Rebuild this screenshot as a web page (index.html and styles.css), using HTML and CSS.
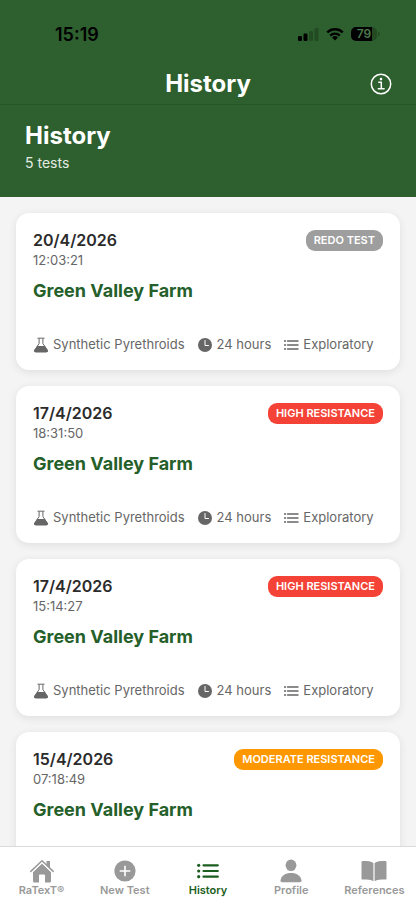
FILE: index.html
```html
<!DOCTYPE html>
<html lang="en">
<head>
<meta charset="utf-8">
<meta name="viewport" content="width=device-width, initial-scale=1">
<title>History</title>
<link rel="stylesheet" href="styles.css">
</head>
<body>
<svg class="sprite" aria-hidden="true">
  <symbol id="flask" viewBox="0 0 16 16">
    <path d="M4.500 1.200h7M6.100 1.500v5L1.800 13q-1.100 2 1 2h10.400q2.100 0 1-2L9.900 6.500v-5" fill="none" stroke="currentColor" stroke-width="1"/>
    <path d="M4.200 8.900h7.600l2.800 4.100q.8 2-1.200 2H2.600q-2 0-1.200-2z" fill="currentColor"/>
  </symbol>
  <symbol id="clock" viewBox="0 0 16 16">
    <circle cx="8" cy="8" r="7" fill="currentColor"/>
    <path d="M8 3.500V8.500h3.500" fill="none" stroke="#fff" stroke-width="1" stroke-linecap="round"/>
  </symbol>
  <symbol id="list" viewBox="0 0 16 16">
    <path d="M4.500 4H15M4.500 8H15M4.500 12H15" fill="none" stroke="currentColor" stroke-width="1.500" stroke-linecap="round"/>
    <g fill="currentColor"><circle cx="2" cy="4" r="1"/><circle cx="2" cy="8" r="1"/><circle cx="2" cy="12" r="1"/></g>
  </symbol>
</svg>

<header class="top">
  <div class="status">
    <span class="clock">15:19</span>
    <div class="indicators">
      <svg width="22" height="14" viewBox="0 0 22 14" aria-hidden="true">
        <rect x="1" y="9" width="4" height="5" rx="1.200"/>
        <rect x="6.500" y="6.500" width="4" height="7.500" rx="1.200"/>
        <rect x="12" y="4" width="4" height="10" rx="1.200" opacity=".22"/>
        <rect x="17.500" y="1" width="4" height="13" rx="1.200" opacity=".22"/>
      </svg>
      <svg width="18" height="14" viewBox="0 0 18 14" aria-hidden="true">
        <g fill="none" stroke="#000" stroke-width="2.300"><path d="M1.200 5.400a11.200 11.200 0 0 1 15.600 0"/><path d="M4.200 8.600a7 7 0 0 1 9.600 0"/></g>
        <path d="M9 13.400 6.100 10.500a4.200 4.200 0 0 1 5.800 0z"/>
      </svg>
      <div class="battery"><span>79</span></div>
    </div>
  </div>
  <div class="nav">
    <h1 class="nav-title">History</h1>
    <button class="info" type="button" aria-label="Information">
      <svg width="22" height="22" viewBox="0 0 22 22" fill="none" stroke="#fff" aria-hidden="true">
        <circle cx="11" cy="11" r="9.700" stroke-width="1.500"/>
        <path d="M8.800 9.300h2.500v6M8.300 15.700h5.800" stroke-width="1.500" stroke-linecap="round" stroke-linejoin="round"/>
        <circle cx="11" cy="6.100" r="1.300" fill="#fff" stroke="none"/>
      </svg>
    </button>
  </div>
</header>

<section class="summary">
  <h2>History</h2>
  <p>5 tests</p>
</section>

<main class="tests">
  <article class="card">
    <div class="card-head"><div><h3>20/4/2026</h3><time>12:03:21</time></div><span class="badge redo">REDO TEST</span></div>
    <p class="farm">Green Valley Farm</p>
    <ul class="meta">
      <li><svg><use href="#flask"/></svg>Synthetic Pyrethroids</li>
      <li><svg><use href="#clock"/></svg>24 hours</li>
      <li><svg><use href="#list"/></svg>Exploratory</li>
    </ul>
  </article>
  <article class="card">
    <div class="card-head"><div><h3>17/4/2026</h3><time>18:31:50</time></div><span class="badge high">HIGH RESISTANCE</span></div>
    <p class="farm">Green Valley Farm</p>
    <ul class="meta">
      <li><svg><use href="#flask"/></svg>Synthetic Pyrethroids</li>
      <li><svg><use href="#clock"/></svg>24 hours</li>
      <li><svg><use href="#list"/></svg>Exploratory</li>
    </ul>
  </article>
  <article class="card">
    <div class="card-head"><div><h3>17/4/2026</h3><time>15:14:27</time></div><span class="badge high">HIGH RESISTANCE</span></div>
    <p class="farm">Green Valley Farm</p>
    <ul class="meta">
      <li><svg><use href="#flask"/></svg>Synthetic Pyrethroids</li>
      <li><svg><use href="#clock"/></svg>24 hours</li>
      <li><svg><use href="#list"/></svg>Exploratory</li>
    </ul>
  </article>
  <article class="card">
    <div class="card-head"><div><h3>15/4/2026</h3><time>07:18:49</time></div><span class="badge moderate">MODERATE RESISTANCE</span></div>
    <p class="farm">Green Valley Farm</p>
    <ul class="meta"></ul>
  </article>
</main>

<nav class="tabs">
  <a href="#home">
    <svg viewBox="0 0 26 26" fill="currentColor" aria-hidden="true">
      <path d="M13 5.500 22 13.800V23q0 1.500-1.500 1.500H16v-7q0-1-1-1h-4q-1 0-1 1v7H5.500Q4 24.500 4 23v-9.200z"/>
      <path d="M13 5.200 3 14.600M13 5.200l10 9.400" fill="none" stroke="#fff" stroke-width="1"/>
      <path d="M1.800 13.400 13 2.800l11.200 10.600" fill="none" stroke="currentColor" stroke-width="1.500" stroke-linecap="round" stroke-linejoin="round"/>
      <path d="M17.500 3H21v7.200l-3.500-3.300z"/>
    </svg>RaTexT®</a>
  <a href="#new">
    <svg viewBox="0 0 26 26" aria-hidden="true"><circle cx="13" cy="13" r="10.600" fill="currentColor"/><path d="M13 8.300v9.400M8.300 13h9.400" stroke="#fff" stroke-width="1.600" stroke-linecap="round"/></svg>New Test</a>
  <a href="#history" class="active" aria-current="page">
    <svg viewBox="0 0 26 26" aria-hidden="true"><path d="M8.500 7.300h14.300M8.500 13h14.300M8.500 18.700h14.300" stroke="currentColor" stroke-width="2.200" stroke-linecap="round"/><g fill="currentColor"><circle cx="3.700" cy="7.300" r="1.600"/><circle cx="3.700" cy="13" r="1.600"/><circle cx="3.700" cy="18.700" r="1.600"/></g></svg>History</a>
  <a href="#profile">
    <svg viewBox="0 0 26 26" fill="currentColor" aria-hidden="true"><ellipse cx="13" cy="7.300" rx="5.400" ry="5.800"/><path d="M4.200 24.300q-1.900 0-1.700-1.800C3.200 17.600 7.500 15 13 15s9.800 2.600 10.500 7.500q.2 1.800-1.700 1.800z"/></svg>Profile</a>
  <a href="#references">
    <svg viewBox="0 0 26 26" fill="currentColor" aria-hidden="true"><path d="M12.400 4.900v18.300C10 21.800 6.500 21.600 1.700 21.600q-1.200 0-1.200-1.200V4.300q0-1.200 1.200-1.200c5 0 8.600.3 10.700 1.800zM13.600 4.900v18.300c2.400-1.400 5.900-1.600 10.700-1.600q1.200 0 1.200-1.200V4.300q0-1.200-1.200-1.200c-5 0-8.600.3-10.700 1.800z"/></svg>References</a>
</nav>
</body>
</html>
```
FILE: styles.css
```css
* { box-sizing: border-box; }

body {
  margin: 0;
  height: 100vh;
  display: flex;
  flex-direction: column;
  overflow: hidden;
  background: #f4f4f4;
  color: #2b2b2b;
  font-family: Inter, "Liberation Sans", sans-serif;
}

h1, h2, h3, p, ul { margin: 0; padding: 0; }

.sprite { display: none; }

.top {
  flex: none;
  background: #2d602e;
  border-bottom: 1px solid #285528;
}

.status {
  display: flex;
  justify-content: space-between;
  align-items: center;
  height: 64px;
  padding: 4px 36px 0 55px;
}

.clock {
  color: #000;
  font-size: 18px;
  font-weight: 600;
}

.indicators {
  display: flex;
  align-items: center;
  gap: 7px;
}

.indicators > svg { display: block; }

.battery {
  position: relative;
  width: 26px;
  height: 14px;
  margin-right: 3px;
  border-radius: 5px;
  background: linear-gradient(90deg, #000 79%, #234a23 79%);
  color: #4d7a4e;
  font-size: 12px;
  font-weight: 600;
  line-height: 14px;
  text-align: center;
}

.battery::after {
  content: "";
  position: absolute;
  left: 27px;
  top: 5px;
  width: 2px;
  height: 4px;
  border-radius: 0 2px 2px 0;
  background: #234a23;
}

.nav {
  display: grid;
  grid-template-columns: 1fr auto 1fr;
  align-items: center;
  height: 40px;
  padding: 0 24px;
}

.nav-title {
  grid-column: 2;
  color: #fff;
  font-size: 24px;
  line-height: 40px;
  font-weight: 700;
}

.info {
  justify-self: end;
  padding: 0;
  border: 0;
  background: none;
}

.info svg { display: block; }

.summary {
  flex: none;
  padding: 16px 25px 24px;
  background: #2d602e;
  color: #fff;
}

.summary h2 {
  font-size: 24px;
  line-height: 30px;
  font-weight: 700;
}

.summary p {
  margin-top: 2px;
  color: #e4ece4;
  font-size: 14px;
  line-height: 20px;
}

.tests {
  flex: 1;
  min-height: 0;
  overflow: hidden;
  display: flex;
  flex-direction: column;
  gap: 16px;
  padding: 16px;
}

.card {
  flex: none;
  padding: 16px 17px;
  border-radius: 13px;
  background: #fff;
  box-shadow: 0 2px 8px rgba(0, 0, 0, .09);
}

.card-head {
  display: flex;
  justify-content: space-between;
  align-items: flex-start;
}

.card h3 {
  font-size: 16px;
  line-height: 22px;
  font-weight: 600;
}

.card time {
  display: block;
  color: #666;
  font-size: 13px;
  line-height: 18px;
}

.badge {
  margin-top: 1px;
  padding: 0 8px;
  border-radius: 9px;
  color: #fff;
  font-size: 11px;
  line-height: 21px;
  font-weight: 600;
}

.redo { background: #9e9e9e; }
.high { background: #f44336; }
.moderate { background: #ff9800; }

.farm {
  margin-top: 10px;
  color: #25602a;
  font-size: 18px;
  line-height: 24px;
  font-weight: 700;
}

.meta {
  display: flex;
  gap: 12px;
  min-height: 19px;
  margin-top: 32px;
  list-style: none;
  color: #666;
  font-size: 13px;
  line-height: 19px;
  white-space: nowrap;
}

.meta li {
  display: flex;
  align-items: center;
  gap: 4px;
}

.meta svg {
  width: 16px;
  height: 16px;
}

.tabs {
  flex: none;
  display: grid;
  grid-template-columns: repeat(5, 1fr);
  height: 58px;
  padding-top: 11px;
  border-top: 1px solid #dadada;
  background: #fff;
}

.tabs a {
  display: flex;
  flex-direction: column;
  align-items: center;
  color: #999;
  font-size: 11px;
  line-height: 12px;
  font-weight: 600;
  text-decoration: none;
}

.tabs svg {
  display: block;
  width: 26px;
  height: 26px;
}

.tabs .active { color: #1b5e20; }
```
